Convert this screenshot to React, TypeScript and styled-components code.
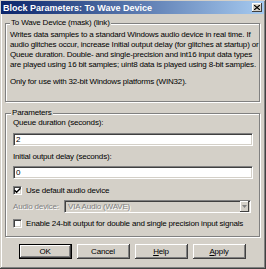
import styled, { createGlobalStyle } from "styled-components";

const GlobalStyle = createGlobalStyle`
  html, body {
    margin: 0;
    padding: 0;
    background: #d4d0c8;
  }
  * {
    box-sizing: border-box;
  }
`;

const Window = styled.div`
  width: 266px;
  height: 269px;
  padding: 1px 2px 2px 1px;
  background: #d4d0c8;
  box-shadow: inset -1px -1px #404040, inset 1px 1px #d4d0c8,
    inset -2px -2px #808080, inset 2px 2px #ffffff;
  font-family: "Liberation Sans", Arial, sans-serif;
  font-size: 8px;
  letter-spacing: -0.18px;
  color: #000;
  display: flex;
  flex-direction: column;
`;

const TitleBar = styled.div`
  height: 13px;
  display: flex;
  align-items: center;
  justify-content: space-between;
  padding: 0 2px 0 2px;
  background: linear-gradient(to right, #0a246a, #a6caf0);
`;

const Title = styled.span`
  color: #fff;
  font-weight: bold;
  font-size: 9px;
  letter-spacing: 0;
  white-space: nowrap;
`;

const CloseButton = styled.div`
  width: 10px;
  height: 9px;
  background: #d4d0c8;
  display: flex;
  align-items: center;
  justify-content: center;
  box-shadow: inset -1px -1px #404040, inset 1px 1px #fff;
`;

const Group = styled.fieldset<{ $top: number; $pad: string }>`
  margin: ${(p) => p.$top}px 4px 0 4px;
  padding: ${(p) => p.$pad};
  border: 1px solid #808080;
  box-shadow: inset 1px 1px #fff, 1px 1px #fff;
  min-width: 0;
`;

const Legend = styled.legend<{ $shift?: number }>`
  padding: 0 1px;
  margin-left: ${(p) => p.$shift ?? 0}px;
  line-height: 10px;
  background: #d4d0c8;
  white-space: nowrap;
`;

const Para = styled.p<{ $gap?: number }>`
  margin: ${(p) => p.$gap ?? 0}px 0 0 0;
  line-height: 10px;
  white-space: nowrap;
`;

const Stack = styled.div`
  display: flex;
  flex-direction: column;
`;

const Label = styled.div<{ $gap?: number }>`
  margin-top: ${(p) => p.$gap ?? 0}px;
  line-height: 10px;
  white-space: nowrap;
`;

const Edit = styled.input<{ $gap?: number }>`
  margin: ${(p) => p.$gap ?? 0}px 0 0 0;
  width: 240px;
  height: 13px;
  padding: 0 2px;
  border: 1px solid;
  border-color: #808080 #fff #fff #808080;
  box-shadow: inset 1px 1px #404040, inset -1px -1px #d4d0c8;
  background: #fff;
  font-family: "Liberation Sans", Arial, sans-serif;
  font-size: 8px;
  color: #000;
  outline: none;
`;

const Row = styled.div<{ $gap?: number; $h?: number }>`
  margin-top: ${(p) => p.$gap ?? 0}px;
  height: ${(p) => p.$h ?? 10}px;
  display: flex;
  align-items: center;
  white-space: nowrap;
`;

const CheckBox = styled.span`
  width: 9px;
  height: 9px;
  margin-right: 4px;
  background: #fff;
  border: 1px solid;
  border-color: #808080 #fff #fff #808080;
  box-shadow: inset 1px 1px #404040, inset -1px -1px #d4d0c8;
  display: flex;
  align-items: center;
  justify-content: center;
  flex-shrink: 0;
`;

const Disabled = styled.span<{ $w?: number }>`
  width: ${(p) => (p.$w ? `${p.$w}px` : "auto")};
  color: #808080;
  text-shadow: 1px 1px #fff;
  flex-shrink: 0;
`;

const Combo = styled.div`
  width: 187px;
  height: 13px;
  display: flex;
  align-items: center;
  border: 1px solid;
  border-color: #808080 #fff #fff #808080;
  box-shadow: inset 1px 1px #404040, inset -1px -1px #d4d0c8;
  background: #d4d0c8;
  padding: 1px;
`;

const ComboText = styled.span`
  flex: 1;
  padding-left: 2px;
  color: #808080;
  text-shadow: 1px 1px #fff;
  line-height: 10px;
`;

const ComboArrow = styled.span`
  width: 9px;
  height: 11px;
  display: flex;
  align-items: center;
  justify-content: center;
  background: #d4d0c8;
  box-shadow: inset -1px -1px #404040, inset 1px 1px #fff;
`;

const Buttons = styled.div`
  margin-top: 7px;
  display: flex;
  justify-content: center;
  gap: 5px;
  padding-right: 1px;
`;

const Button = styled.div<{ $default?: boolean }>`
  width: 53px;
  height: 15px;
  display: flex;
  align-items: center;
  justify-content: center;
  background: #d4d0c8;
  border: ${(p) => (p.$default ? "1px solid #000" : "none")};
  box-shadow: ${(p) =>
    p.$default
      ? "inset -1px -1px #404040, inset 1px 1px #fff, inset -2px -2px #808080"
      : "inset -1px -1px #404040, inset 1px 1px #fff, inset -2px -2px #808080, inset 2px 2px #d4d0c8"};
`;

export default function App() {
  return (
    <>
      <GlobalStyle />
      <Window>
        <TitleBar>
          <Title>Block Parameters: To Wave Device</Title>
          <CloseButton>
            <svg width="6" height="5" viewBox="0 0 6 5">
              <path d="M0 0 L6 5 M6 0 L0 5" stroke="#000" strokeWidth="1.2" />
            </svg>
          </CloseButton>
        </TitleBar>

        <Group $top={4} $pad="2px 4px 14px 4px">
          <Legend>To Wave Device (mask) (link)</Legend>
          <Para>
            Writes data samples to a standard Windows audio device in real time. If
            <br />
            audio glitches occur, increase Initial output delay (for glitches at startup) or
            <br />
            Queue duration. Double- and single-precision and int16 input data types
            <br />
            are played using 16 bit samples; uint8 data is played using 8-bit samples.
          </Para>
          <Para $gap={7}>Only for use with 32-bit Windows platforms (WIN32).</Para>
        </Group>

        <Group $top={6} $pad="0 7px 8px 7px">
          <Legend $shift={-2}>Parameters</Legend>
          <Stack>
            <Label>Queue duration (seconds):</Label>
            <Edit $gap={5} value="2" readOnly />
            <Label $gap={6}>Initial output delay (seconds):</Label>
            <Edit $gap={4} value="0" readOnly />
            <Row $gap={6}>
              <CheckBox>
                <svg width="7" height="7" viewBox="0 0 7 7">
                  <path d="M0.5 3.2 L2.6 5.3 L6.5 1.2" stroke="#000" strokeWidth="1.4" fill="none" />
                </svg>
              </CheckBox>
              Use default audio device
            </Row>
            <Row $gap={5} $h={13}>
              <Disabled $w={51}>Audio device:</Disabled>
              <Combo>
                <ComboText>VIA Audio (WAVE)</ComboText>
                <ComboArrow>
                  <svg width="5" height="3" viewBox="0 0 5 3">
                    <path d="M0 0 L5 0 L2.5 3 Z" fill="#808080" />
                  </svg>
                </ComboArrow>
              </Combo>
            </Row>
            <Row $gap={5}>
              <CheckBox />
              Enable 24-bit output for double and single precision input signals
            </Row>
          </Stack>
        </Group>

        <Buttons>
          <Button $default>OK</Button>
          <Button>Cancel</Button>
          <Button>
            <span>
              <u>H</u>elp
            </span>
          </Button>
          <Button>
            <span>
              <u>A</u>pply
            </span>
          </Button>
        </Buttons>
      </Window>
    </>
  );
}
